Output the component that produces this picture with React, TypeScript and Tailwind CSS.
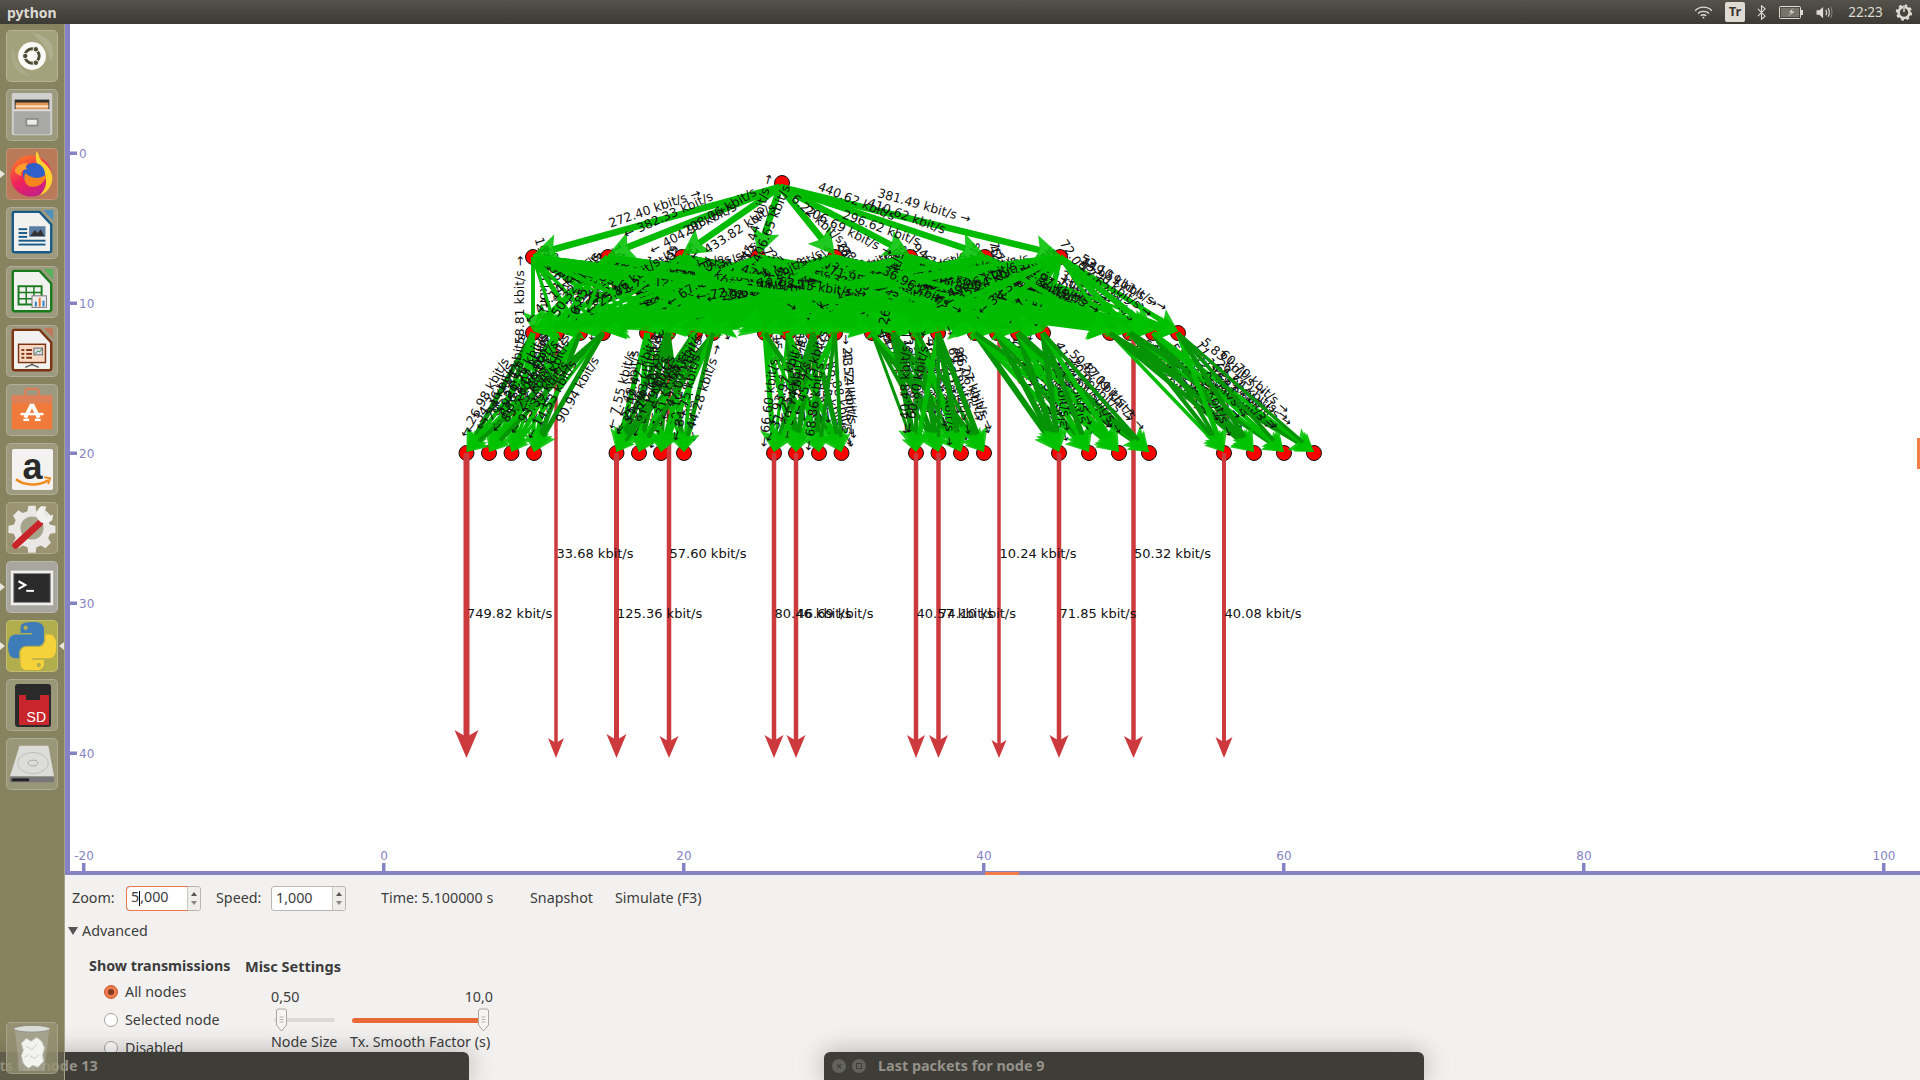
import React from 'react';

const UI_FONT = "font-['Noto_Sans','Open_Sans',sans-serif]";

// node coordinates read off the reference, in page pixels
const ROOT = { x: 782, y: 183 };
const MID_X = [533, 608, 682, 758, 835, 910, 985, 1060];
const UPPER_GROUPS = [
  [533, 557, 580, 603],
  [647, 668, 695, 713],
  [765, 788, 813, 835],
  [872, 893, 917, 938],
  [975, 997, 1018, 1043],
  [1110, 1130, 1153, 1178],
];
const LEAF_GROUPS = [
  [466.5, 489, 511.5, 534],
  [616.5, 639, 661, 684],
  [774, 796, 819, 841.5],
  [916, 938.5, 961, 984],
  [1059, 1089, 1119, 1149],
  [1224, 1254, 1284, 1314],
];
const MID_Y = 257;
const UPPER_Y = 333;
const LEAF_Y = 453;

// ly 558 marks the links that leave from the upper row, 618 the ones from the leaves
const DOWNLINKS = [
  { x: 466.5, w: 6, head: 28, half: 12, label: '749.82 kbit/s', ly: 618 },
  { x: 556, w: 3.5, head: 20, half: 8, label: '33.68 kbit/s', ly: 558 },
  { x: 616.5, w: 5, head: 24, half: 10, label: '125.36 kbit/s', ly: 618 },
  { x: 669, w: 4.5, head: 22, half: 9.5, label: '57.60 kbit/s', ly: 558 },
  { x: 774, w: 4.5, head: 23, half: 9.5, label: '80.46 kbit/s', ly: 618 },
  { x: 796, w: 4.5, head: 23, half: 9.5, label: '46.69 kbit/s', ly: 618 },
  { x: 916, w: 4.5, head: 23, half: 9, label: '40.57 kbit/s', ly: 618 },
  { x: 938.5, w: 4.5, head: 23, half: 9.5, label: '74.10 kbit/s', ly: 618 },
  { x: 999, w: 3.5, head: 18, half: 7.5, label: '10.24 kbit/s', ly: 558 },
  { x: 1059, w: 4.5, head: 23, half: 9.5, label: '71.85 kbit/s', ly: 618 },
  { x: 1133.5, w: 4.5, head: 22, half: 9.5, label: '50.32 kbit/s', ly: 558 },
  { x: 1224, w: 4, head: 21, half: 8.5, label: '40.08 kbit/s', ly: 618 },
];

// labels around the root and the outer edges, placed by hand
const PLACED_LABELS: [string, number, number, number][] = [
  ['272.40 kbit/s →', 656, 212, -19],
  ['← 382.33 kbit/s', 670, 219, -24],
  ['← 404.90 kbit/s', 695, 232, -28],
  ['298.06 kbit/s', 722, 215, -30],
  ['433.82 kbit/s', 742, 232, -33],
  ['75.44 kbit/s →', 762, 218, -75],
  ['406.65 kbit/s', 775, 225, -68],
  ['6.22 kbit/s', 815, 222, 42],
  ['206.69 kbit/s →', 847, 235, 27],
  ['296.62 kbit/s', 880, 232, 20],
  ['440.62 kbit/s', 855, 205, 22],
  ['410.62 kbit/s', 905, 220, 20],
  ['381.49 kbit/s →', 923, 210, 16],
  ['449.59 kbit/s →', 1122, 288, 30],
  ['58.81 kbit/s →', 524, 300, -90],
  ['90.94 kbit/s', 581, 392, -60],
  ['44.28 kbit/s →', 708, 388, -72],
  ['43.74 kbit/s →', 846, 395, 85],
  ['86.27 kbit/s →', 970, 390, 68],
  ['50.87 kbit/s →', 1100, 386, 45],
  ['60.70 kbit/s →', 1252, 385, 42],
];

function makeRandom(seed: number) {
  let s = seed;
  return () => {
    s = (s * 1664525 + 1013904223) % 4294967296;
    return s / 4294967296;
  };
}

type Label = { text: string; x: number; y: number; rot: number };
type Edge = { x1: number; y1: number; x2: number; y2: number; w: number; dark?: boolean; label?: Label };

function buildEdges() {
  const rnd = makeRandom(42);
  const edges: Edge[] = [];

  const add = (e: Edge) => {
    const rate = (rnd() * 90 + 5).toFixed(2);
    let rot = (Math.atan2(e.y2 - e.y1, e.x2 - e.x1) * 180) / Math.PI;
    const forward = rot >= -90 && rot <= 90;
    if (!forward) rot -= 180;
    const rad = (rot * Math.PI) / 180;
    const t = 0.35 + rnd() * 0.3;
    edges.push({
      ...e,
      label: {
        text: forward ? `${rate} kbit/s →` : `← ${rate} kbit/s`,
        x: e.x1 + (e.x2 - e.x1) * t + Math.sin(rad) * 7,
        y: e.y1 + (e.y2 - e.y1) * t - Math.cos(rad) * 7,
        rot,
      },
    });
  };

  // shuffled so that labels get covered by whichever edge is drawn later
  const middle: Edge[] = [];
  MID_X.forEach((x) => {
    UPPER_GROUPS.flat().forEach((ux) => {
      middle.push({ x1: x, y1: MID_Y, x2: ux, y2: UPPER_Y - 2, w: 3 + rnd() * 3.5 });
    });
  });
  middle.sort(() => rnd() - 0.5).forEach(add);

  UPPER_GROUPS.forEach((group, g) => {
    group.forEach((ux) => {
      LEAF_GROUPS[g].forEach((lx) => {
        add({ x1: ux, y1: UPPER_Y, x2: lx, y2: LEAF_Y - 1, w: 3 + rnd() * 3, dark: rnd() > 0.5 });
      });
    });
  });
  MID_X.forEach((x) => edges.push({ x1: ROOT.x - 2, y1: ROOT.y + 4, x2: x, y2: MID_Y - 2, w: 6.5 }));
  return edges;
}

const GRAPH = buildEdges();

function GreenArrow({ e }: { e: Edge }) {
  const dx = e.x2 - e.x1;
  const dy = e.y2 - e.y1;
  const len = Math.hypot(dx, dy);
  const ux = dx / len;
  const uy = dy / len;
  const L = e.w * 2.6 + 9;
  const H = e.w * 1.4 + 5;
  const bx = e.x2 - ux * L;
  const by = e.y2 - uy * L;
  const nx = e.x2 - ux * L * 0.8;
  const ny = e.y2 - uy * L * 0.8;
  const pts = `${e.x2},${e.y2} ${bx - uy * H},${by + ux * H} ${nx},${ny} ${bx + uy * H},${by - ux * H}`;
  return (
    <g>
      <line x1={e.x1} y1={e.y1} x2={nx} y2={ny} stroke={e.dark ? '#059405' : '#00bb00'} strokeWidth={e.w} />
      <polygon points={pts} fill="#00c200" fillOpacity={0.88} />
      {e.label && (
        <text
          x={e.label.x}
          y={e.label.y}
          textAnchor="middle"
          fontSize={12.5}
          fill="#111"
          transform={`rotate(${e.label.rot} ${e.label.x} ${e.label.y})`}
        >
          {e.label.text}
        </text>
      )}
    </g>
  );
}

function Node({ x, y }: { x: number; y: number }) {
  return <circle cx={x} cy={y} r={7.5} fill="#ff0000" stroke="#111" strokeWidth={1} />;
}

function Canvas() {
  const ruler = '#8583c4';
  return (
    <svg viewBox="65 24 1855 851" width={1855} height={851} className="block bg-white font-['DejaVu_Sans',sans-serif]">
      {/* rulers */}
      <rect x={65} y={24} width={5} height={851} fill={ruler} />
      <rect x={65} y={871} width={1855} height={4} fill={ruler} />
      <rect x={985} y={872} width={34} height={3} fill="#f37d4b" />
      <rect x={1917} y={438} width={3} height={31} fill="#f37d4b" />
      {[0, 10, 20, 30, 40].map((v, i) => (
        <g key={v}>
          <rect x={70} y={151.5 + i * 150} width={7} height={3.5} fill={ruler} />
          <text x={79} y={157.5 + i * 150} fontSize={12} fill={ruler}>{v}</text>
        </g>
      ))}
      {[-20, 0, 20, 40, 60, 80, 100].map((v, i) => (
        <g key={v}>
          <rect x={82 + i * 300} y={863} width={3.5} height={8} fill={ruler} />
          <text x={84 + i * 300} y={860} fontSize={12} textAnchor="middle" fill={ruler}>{v}</text>
        </g>
      ))}

      {/* nodes */}
      {LEAF_GROUPS.flat().map((x) => <Node key={`l${x}`} x={x} y={LEAF_Y} />)}
      {UPPER_GROUPS.flat().map((x) => <Node key={`u${x}`} x={x} y={UPPER_Y} />)}
      {MID_X.map((x) => <Node key={`m${x}`} x={x} y={MID_Y} />)}
      <Node x={ROOT.x} y={ROOT.y} />

      {/* downlinks */}
      {DOWNLINKS.map((d) => (
        <g key={d.x} fill="#cd3a3e">
          <line x1={d.x} y1={d.ly === 558 ? UPPER_Y : LEAF_Y} x2={d.x} y2={745} stroke="#cd3a3e" strokeWidth={d.w} />
          <polygon points={`${d.x},758 ${d.x - d.half},${758 - d.head} ${d.x},${758 - d.head * 0.75} ${d.x + d.half},${758 - d.head}`} />
        </g>
      ))}

      {/* transmissions, each with its own label so later edges can cover it */}
      {GRAPH.map((e, i) => <GreenArrow key={i} e={e} />)}

      {/* labels */}
      <g fontSize={12.5} fill="#111">
        {PLACED_LABELS.map(([t, x, y, r]) => (
          <text key={t} x={x} y={y} textAnchor="middle" transform={`rotate(${r} ${x} ${y})`}>{t}</text>
        ))}
        {DOWNLINKS.map((d) => (
          <text key={d.label} x={d.x + 0.5} y={d.ly} fontSize={13}>{d.label}</text>
        ))}
      </g>
    </svg>
  );
}

/* ---------- launcher icons ---------- */

function UbuntuIcon() {
  return (
    <svg viewBox="0 0 52 52" className="h-full w-full">
      <path d="M26 2c18 2 26 14 20 30-3-12-10-22-20-30z" fill="#fff" fillOpacity={0.14} />
      <path d="M6 18c-4 14 4 28 20 30-10-6-18-16-20-30z" fill="#fff" fillOpacity={0.1} />
      <circle cx={26} cy={26} r={14.5} fill="#fbfaf6" />
      <circle cx={26} cy={26} r={7.5} fill="none" stroke="#4e4a35" strokeWidth={3} />
      <circle cx={19} cy={26} r={2.8} fill="#4e4a35" stroke="#fbfaf6" />
      <circle cx={30} cy={19} r={2.8} fill="#4e4a35" stroke="#fbfaf6" />
      <circle cx={30} cy={33} r={2.8} fill="#4e4a35" stroke="#fbfaf6" />
    </svg>
  );
}

function FilesIcon() {
  return (
    <svg viewBox="0 0 52 52" className="h-full w-full">
      <rect x={5} y={3} width={42} height={44} rx={2} fill="#cfcfcd" />
      <rect x={8} y={10} width={36} height={11} fill="#2e2e2e" />
      <rect x={9} y={13} width={34} height={8} fill="#e79650" />
      <rect x={9} y={16} width={34} height={2} fill="#f6e6cf" />
      <rect x={7} y={20} width={38} height={26} rx={1} fill="#a9a9a7" />
      <rect x={7} y={20} width={38} height={2} fill="#dcdcda" />
      <rect x={19} y={29} width={14} height={9} rx={1} fill="#8b8b89" />
      <rect x={21} y={31} width={10} height={5} fill="#ececea" />
    </svg>
  );
}

function FirefoxIcon() {
  return (
    <svg viewBox="0 0 52 52" className="h-full w-full">
      <defs>
        <linearGradient id="ffOuter" x1="0" y1="0" x2="0.5" y2="1">
          <stop offset="0" stopColor="#ff8a1c" />
          <stop offset="0.6" stopColor="#f0245a" />
          <stop offset="1" stopColor="#c81f86" />
        </linearGradient>
      </defs>
      <circle cx={25} cy={28} r={21.5} fill="url(#ffOuter)" />
      <path d="M31 2c3 5 2 8 7 12 6 5 10 11 9 18-1 8-6 14-13 16 5-5 8-11 6-18-2-8-10-12-10-20 0-3 0-6 1-8z" fill="#ffd22e" />
      <circle cx={28} cy={26} r={11.5} fill="#2f5fc9" />
      <path d="M19 25c6 6 15 7 22 1-1 9-9 15-17 13-4-1-8-7-5-14z" fill="#f5841f" />
      <path d="M8 22c3-6 9-8 14-7-3 2-3 4-1 6-4 0-7 2-6 7-3-1-7-3-7-6z" fill="#ff9d2c" />
    </svg>
  );
}

function DocIcon({ edge, tab, kind }: { edge: string; tab: string; kind: 'writer' | 'calc' | 'impress' }) {
  return (
    <svg viewBox="0 0 52 52" className="h-full w-full">
      <path d="M38 2h10v11z" fill={tab} />
      <path d="M8 4h26l12 13v27a2 2 0 0 1-2 2H8a2 2 0 0 1-2-2V6a2 2 0 0 1 2-2z" fill="#f1f1ef" stroke={edge} strokeWidth={2.5} />
      {kind === 'writer' && (
        <g fill={edge}>
          <rect x={12} y={21} width={9} height={2} />
          <rect x={12} y={25} width={9} height={2} />
          <rect x={12} y={29} width={9} height={2} />
          <rect x={12} y={33} width={28} height={2} />
          <rect x={12} y={37} width={28} height={2} />
          <rect x={23} y={19} width={17} height={11} fill="#5d7fa6" />
          <path d="M24 29l5-6 3 3 3-4 4 7z" fill="#333" />
        </g>
      )}
      {kind === 'calc' && (
        <g>
          <rect x={12} y={20} width={24} height={19} fill="none" stroke={edge} strokeWidth={2} />
          <path d="M20 20v19M28 20v19M12 26.500h24M12 33h24" stroke={edge} strokeWidth={1.5} />
          <rect x={26} y={30} width={15} height={12} fill="#eee" stroke="#777" />
          <rect x={29} y={36} width={2} height={5} fill="#2f7fc0" />
          <rect x={33} y={32} width={2} height={9} fill="#e8762c" />
          <rect x={37} y={35} width={2} height={6} fill="#2f7fc0" />
        </g>
      )}
      {kind === 'impress' && (
        <g>
          <rect x={12} y={19} width={28} height={19} fill="#f7d9c4" stroke={edge} strokeWidth={1.5} />
          <rect x={15} y={24} width={3} height={2} fill={edge} />
          <rect x={15} y={28} width={3} height={2} fill={edge} />
          <rect x={15} y={32} width={3} height={2} fill={edge} />
          <rect x={20} y={24} width={6} height={2} fill={edge} />
          <rect x={20} y={28} width={6} height={2} fill={edge} />
          <rect x={20} y={32} width={6} height={2} fill={edge} />
          <rect x={28} y={23} width={9} height={7} fill="#dde" stroke="#666" />
          <path d="M29 29l3-3 2 1 2-3" stroke="#2a8a2a" fill="none" />
          <path d="M26 38v3M19 43l7-3 7 3" stroke="#555" strokeWidth={1.2} fill="none" />
        </g>
      )}
    </svg>
  );
}

function StoreIcon() {
  return (
    <svg viewBox="0 0 52 52" className="h-full w-full">
      <path d="M19 11V7a3 3 0 0 1 3-3h8a3 3 0 0 1 3 3v4" fill="none" stroke="#d9805a" strokeWidth={2.5} />
      <path d="M5 11h42v35H5z" fill="#f07a3a" />
      <path d="M5 11h42v8H5z" fill="#dd8058" />
      <path d="M26 20l-7 14M26 20l7 14" stroke="#fff" strokeWidth={4} fill="none" />
      <rect x={14} y={29} width={24} height={2.5} fill="#fff" />
      <rect x={17} y={35} width={6} height={2.5} fill="#fff" />
      <rect x={29} y={35} width={6} height={2.5} fill="#fff" />
    </svg>
  );
}

function AmazonIcon() {
  return (
    <div className="relative m-[5px] flex h-[41px] w-[41px] justify-center rounded-[2px] bg-[#f3f2f0]">
      <span className="h-[41px] font-['Liberation_Sans',sans-serif] text-[36px] leading-[36px] font-bold text-[#2a2a2a]">a</span>
      <svg viewBox="0 0 42 42" className="absolute inset-0">
        <path d="M4 31c9 7 24 7 33 1" fill="none" stroke="#f08a1d" strokeWidth={2.5} />
        <path d="M33 29l6 1-2 6" fill="none" stroke="#f08a1d" strokeWidth={2} />
      </svg>
    </div>
  );
}

function SettingsIcon() {
  return (
    <svg viewBox="0 0 52 52" className="h-full w-full">
      <path
        d="M22 2h8l1 6 5 2 5-3 6 6-3 5 2 5 6 1v8l-6 1-2 5 3 5-6 6-5-3-5 2-1 6h-8l-1-6-5-2-5 3-6-6 3-5-2-5-6-1v-8l6-1 2-5-3-5 6-6 5 3 5-2z"
        fill="#e9e8e4"
        transform="translate(1.500 1) scale(0.94)"
      />
      <circle cx={26} cy={26} r={12} fill="#a7a48c" />
      <path d="M9 44l25-23" stroke="#c8242a" strokeWidth={7} strokeLinecap="round" />
      <path d="M36 3c-5 3-7 10-3 15 3 4 9 4 14 0l1-6-7 3-3-4 3-7z" fill="#f0f0ee" />
    </svg>
  );
}

function TerminalIcon() {
  return (
    <svg viewBox="0 0 52 52" className="h-full w-full">
      <rect x={4} y={9} width={44} height={36} fill="#f0f0ee" />
      <rect x={7} y={12} width={38} height={30} fill="#2b2b2b" stroke="#888" />
      <path d="M12 20l7 4-7 4" fill="none" stroke="#fff" strokeWidth={2.2} />
      <rect x={20} y={29} width={8} height={2} fill="#fff" />
    </svg>
  );
}

function PythonIcon() {
  return (
    <svg viewBox="0 0 110 110" className="h-full w-full p-[1px]">
      <path
        d="M54.919 0c-4.584.022-8.961.413-12.813 1.095C30.76 3.099 28.7 7.295 28.7 15.032v10.219h26.813v3.406H18.638c-7.793 0-14.616 4.684-16.75 13.594-2.462 10.213-2.571 16.586 0 27.25 1.906 7.938 6.458 13.594 14.25 13.594h9.219v-12.25c0-8.85 7.657-16.656 16.75-16.656h26.781c7.454 0 13.406-6.138 13.406-13.625V15.032c0-7.266-6.13-12.725-13.406-13.937C64.282.328 59.502-.02 54.919 0zM40.419 8.219c2.77 0 5.031 2.299 5.031 5.125 0 2.816-2.262 5.094-5.031 5.094-2.78 0-5.031-2.278-5.031-5.094 0-2.826 2.252-5.125 5.031-5.125z"
        fill="#3d7cb8"
      />
      <path
        d="M85.638 28.657v11.906c0 9.231-7.826 17-16.75 17H42.107c-7.336 0-13.406 6.278-13.406 13.625v25.531c0 7.266 6.319 11.54 13.406 13.625 8.487 2.496 16.626 2.947 26.781 0 6.75-1.954 13.406-5.888 13.406-13.625V86.5H55.513v-3.406H95.7c7.793 0 10.696-5.436 13.406-13.594 2.8-8.399 2.68-16.476 0-27.25-1.926-7.757-5.604-13.594-13.406-13.594zM70.575 93.313c2.78 0 5.031 2.278 5.031 5.094 0 2.826-2.252 5.125-5.031 5.125-2.77 0-5.031-2.299-5.031-5.125 0-2.816 2.262-5.094 5.031-5.094z"
        fill="#f5d13a"
      />
    </svg>
  );
}

function SdIcon() {
  return (
    <div className="relative mx-[8px] mt-[4px] h-[43px] w-[36px] overflow-hidden rounded-[3px] bg-[#2a2a2a]">
      <div className="absolute right-[2px] bottom-[2px] left-[4px] h-[30px] bg-[#c8262c]" />
      <div className="absolute top-0 left-[11px] h-[16px] w-[14px] bg-[#2a2a2a]" />
      <span className="absolute right-[5px] bottom-[3px] font-['Liberation_Sans',sans-serif] text-[14px] leading-none text-white">SD</span>
    </div>
  );
}

function DiskIcon() {
  return (
    <svg viewBox="0 0 52 52" className="h-full w-full">
      <path d="M13 7h30l6 32H3z" fill="#dcdcd8" />
      <ellipse cx={27} cy={25} rx={16} ry={11} fill="none" stroke="#bdbdb8" />
      <ellipse cx={27} cy={25} rx={5} ry={3} fill="none" stroke="#a9a9a3" />
      <path d="M3 39h46v6H3z" fill="#777" />
      <path d="M5 41h18v3H5z" fill="#222" />
    </svg>
  );
}

function TrashIcon() {
  return (
    <svg viewBox="0 0 52 52" className="h-full w-full">
      <path d="M8 6l5 44h26l5-44z" fill="#b9b9b0" fillOpacity={0.45} />
      <ellipse cx={26} cy={6} rx={19} ry={3.500} fill="#dcdcd6" stroke="#8f8f88" />
      <path d="M15 21l5-5 5 3 6-4 5 4 3 7-2 7 1 7-6 6-5-2-5 3-5-5-2-8 2-6z" fill="#f2f2ee" stroke="#c9c9c3" />
      <path d="M20 24l6 4 5-6M24 34l5 3 4-4M18 36l4-3" fill="none" stroke="#c9c9c3" />
    </svg>
  );
}

const TILES: { bg: string; icon: React.ReactNode; pip?: boolean; rightPip?: boolean }[] = [
  { bg: 'bg-[#a4a17d]', icon: <UbuntuIcon /> },
  { bg: 'bg-[#9c9a7e]', icon: <FilesIcon /> },
  { bg: 'bg-[#b87a58]', icon: <FirefoxIcon />, pip: true },
  { bg: 'bg-[#9d9a7f]', icon: <DocIcon edge="#1a5a87" tab="#4d90bd" kind="writer" /> },
  { bg: 'bg-[#9d9a7f]', icon: <DocIcon edge="#197a1c" tab="#55b258" kind="calc" /> },
  { bg: 'bg-[#9d9a7f]', icon: <DocIcon edge="#7d3312" tab="#bd7a5c" kind="impress" /> },
  { bg: 'bg-[#9d9a7f]', icon: <StoreIcon /> },
  { bg: 'bg-[#9d9a7f]', icon: <AmazonIcon /> },
  { bg: 'bg-[#9a9473]', icon: <SettingsIcon /> },
  { bg: 'bg-[#a8a79f]', icon: <TerminalIcon />, pip: true },
  { bg: 'bg-[#b3ae4d]', icon: <PythonIcon />, pip: true, rightPip: true },
  { bg: 'bg-[#9a9678]', icon: <SdIcon /> },
  { bg: 'bg-[#9a9678]', icon: <DiskIcon /> },
];

function Tile({ bg, icon, pip, rightPip }: { bg: string; icon: React.ReactNode; pip?: boolean; rightPip?: boolean }) {
  return (
    <div className={`relative h-[52px] w-[52px] shrink-0 rounded-[5px] border border-white/20 ${bg}`}>
      <div className="absolute inset-0 overflow-hidden">{icon}</div>
      {pip && (
        <span className="absolute top-[21px] left-[-7px] h-0 w-0 border-y-[4px] border-l-[5px] border-y-transparent border-l-[#e8e6dc]" />
      )}
      {rightPip && (
        <span className="absolute top-[21px] right-[-7px] h-0 w-0 border-y-[4px] border-r-[5px] border-y-transparent border-r-[#e8e6dc]" />
      )}
    </div>
  );
}

/* ---------- top bar ---------- */

function TopBar() {
  return (
    <div className={`relative z-30 flex h-[24px] items-center bg-gradient-to-b from-[#55524b] to-[#3c3a35] text-[#dfdbd2] ${UI_FONT}`}>
      <span className="ml-[7px] text-[14px] font-bold">python</span>
      <div className="ml-auto flex items-center">
        <svg viewBox="0 0 20 14" className="mr-[12px] h-[13px] w-[19px]" fill="none" stroke="#dfdbd2" strokeWidth={1.5}>
          <path d="M1 5c5-5 13-5 18 0M4 8c3-3 9-3 12 0M7 10.500c2-1.500 4-1.500 6 0" />
          <circle cx={10} cy={12.500} r={1} fill="#dfdbd2" stroke="none" />
        </svg>
        <span className="mr-[12px] flex h-[20px] w-[20px] items-center justify-center rounded-[2px] bg-[#dfdbd2] text-[13px] font-bold text-[#3c3a35]">Tr</span>
        <svg viewBox="0 0 10 16" className="mr-[13px] h-[15px] w-[9px]" fill="none" stroke="#dfdbd2" strokeWidth={1.2}>
          <path d="M1 4l8 8-4 3.500V.500l4 3.500-8 8" />
        </svg>
        <svg viewBox="0 0 25 13" className="mr-[11px] h-[13px] w-[25px]">
          <rect x={0.5} y={0.5} width={21} height={12} rx={1} fill="none" stroke="#dfdbd2" />
          <rect x={2} y={2} width={18} height={9} fill="#77746c" />
          <rect x={22} y={4} width={2} height={5} fill="#dfdbd2" />
          <path d="M14 2l-4 4.500h3L8 11l8-5.500h-3.500z" fill="#dfdbd2" />
        </svg>
        <svg viewBox="0 0 19 16" className="mr-[13px] h-[15px] w-[19px]" fill="none" stroke="#dfdbd2">
          <path d="M1 5.500h3L8 2v12l-4-3.500H1z" fill="#dfdbd2" stroke="none" />
          <path d="M11 5c1 2 1 4 0 6M13.500 3.500c1.500 3 1.500 6 0 9" strokeWidth={1.3} />
          <path d="M16 2c2 4 2 8 0 12" stroke="#807d75" strokeWidth={1.2} />
        </svg>
        <span className="mr-[11px] w-[37px] text-center text-[13.5px]">22:23</span>
        <svg viewBox="0 0 18 18" className="mr-[7px] h-[18px] w-[18px]" fill="none" stroke="#dfdbd2">
          <circle cx={9} cy={9.500} r={5.500} strokeWidth={2.5} />
          <circle cx={9} cy={9.500} r={7.200} strokeWidth={2} strokeDasharray="3 2.650" />
          <path d="M9 1v8" strokeWidth={2} stroke="#3c3a35" />
          <path d="M9 2v7" strokeWidth={1.5} />
        </svg>
      </div>
    </div>
  );
}

/* ---------- control panel ---------- */

function SpinBox({ value, focused }: { value: string; focused?: boolean }) {
  return (
    <div className={`flex h-[25px] w-[75px] rounded-[3px] border border-[#b9b7b0] bg-white`}>
      <div className={`flex w-[60px] items-center rounded-l-[3px] pl-[4px] ${focused ? 'outline outline-[#e9784c]' : ''}`}>
        {focused ? (
          <span>5<span className="inline-block h-[15px] w-px bg-black align-middle" />,000</span>
        ) : value}
      </div>
      <div className="flex flex-1 flex-col items-center justify-center gap-[5px] rounded-r-[3px] border-l border-[#c9c7c1] bg-[#efeeeb]">
        <span className="h-0 w-0 border-x-[3px] border-b-[4px] border-x-transparent border-b-[#555]" />
        <span className="h-0 w-0 border-x-[3px] border-t-[4px] border-x-transparent border-t-[#888]" />
      </div>
    </div>
  );
}

function Radio({ label, checked }: { label: string; checked?: boolean }) {
  return (
    <div className="flex h-[28px] items-center">
      {checked ? (
        <span className="flex h-[14px] w-[14px] items-center justify-center rounded-full border border-[#c9582f] bg-[#ef7a4d]">
          <span className="h-[6px] w-[6px] rounded-full bg-[#7c3b22]" />
        </span>
      ) : (
        <span className="h-[14px] w-[14px] rounded-full border border-[#a6a49c] bg-white" />
      )}
      <span className="ml-[7px]">{label}</span>
    </div>
  );
}

function Thumb() {
  return (
    <svg viewBox="0 0 13 24" className="h-[24px] w-[13px]">
      <path d="M1.500 3a2 2 0 0 1 2-2h6a2 2 0 0 1 2 2v14l-5 6-5-6z" fill="#f6f5f3" stroke="#a9a7a0" />
      <path d="M4.500 9h4M4.500 11.500h4M4.500 14h4" stroke="#b5b3ac" />
    </svg>
  );
}

function ControlPanel() {
  return (
    <div className={`flex-1 overflow-hidden bg-[#f2f1ef] text-[14.3px] leading-none text-[#3c3c3c] ${UI_FONT}`}>
      <div className="mt-[10px] ml-[7px] flex h-[25px] items-center pt-[1px]">
        <span className="w-[54px]">Zoom:</span>
        <SpinBox value="5,000" focused />
        <span className="ml-[15px] w-[55px]">Speed:</span>
        <SpinBox value="1,000" />
        <span className="ml-[35px] w-[149px]">Time: 5.100000 s</span>
        <span className="w-[85px]">Snapshot</span>
        <span>Simulate (F3)</span>
      </div>
      <div className="mt-[9px] ml-[3px] flex h-[24px] items-center">
        <span className="h-0 w-0 border-x-[5px] border-t-[8px] border-x-transparent border-t-[#555]" />
        <span className="ml-[4px]">Advanced</span>
      </div>
      <div className="mt-[13px] ml-[24px] flex">
        <div className="w-[156px]">
          <div className="flex h-[20px] items-center text-[14.3px] font-bold">Show transmissions</div>
          <div className="mt-[2px] ml-[15px]">
            <Radio label="All nodes" checked />
            <Radio label="Selected node" />
            <Radio label="Disabled" />
          </div>
        </div>
        <div className="w-[260px]">
          <div className="flex h-[20px] items-center text-[14.5px] font-bold">Misc Settings</div>
          <div className="mt-[14px] ml-[26px] flex w-[222px] justify-between">
            <span>0,50</span>
            <span>10,0</span>
          </div>
          <div className="mt-[4px] ml-[29px] flex h-[24px] w-[214px] items-center">
            <div className="relative h-[4px] w-[61px] rounded-full bg-[#dcdad5]">
              <div className="absolute top-[-10px] left-[1px]"><Thumb /></div>
            </div>
            <div className="relative ml-[17px] h-[5px] w-[136px] rounded-full bg-[#e9683a]">
              <div className="absolute top-[-10px] right-[-2px]"><Thumb /></div>
            </div>
          </div>
          <div className="mt-[3px] ml-[26px] flex">
            <span className="w-[79px]">Node Size</span>
            <span>Tx. Smooth Factor (s)</span>
          </div>
        </div>
      </div>
    </div>
  );
}

function WindowTitle({ title, left }: { title: string; left: number }) {
  return (
    <div
      className={`absolute bottom-0 z-10 flex h-[28px] w-[600px] items-center rounded-t-[6px] bg-[#3f3d38] text-[14.4px] font-bold text-[#949289] shadow-[0_0_26px_rgba(0,0,0,0.28)] ${UI_FONT}`}
      style={{ left }}
    >
      <span className="ml-[8px] flex h-[14px] w-[14px] items-center justify-center rounded-full bg-[#63625a] text-[10px] leading-none text-[#3f3d38]">×</span>
      <span className="ml-[6px] flex h-[14px] w-[14px] items-center justify-center rounded-full bg-[#63625a]">
        <span className="h-[6px] w-[6px] border border-[#3f3d38]" />
      </span>
      <span className="ml-[12px]">{title}</span>
    </div>
  );
}

export default function App() {
  return (
    <div className="relative flex h-[1080px] w-[1920px] flex-col overflow-hidden bg-[#87835f]">
      <TopBar />
      <div className="flex flex-1">
        <div className="relative z-20 flex w-[65px] shrink-0 flex-col items-center gap-[7px] border-r border-[#a5a28a] bg-[#87835f]/45 pt-[6px] pb-[6px]">
          {TILES.map((t, i) => <Tile key={i} {...t} />)}
          <div className="mt-auto"><Tile bg="bg-[#9a9678]/70" icon={<TrashIcon />} /></div>
        </div>
        <div className="flex flex-1 flex-col">
          <Canvas />
          <ControlPanel />
        </div>
      </div>
      <WindowTitle title="Last packets for node 13" left={-131} />
      <WindowTitle title="Last packets for node 9" left={824} />
    </div>
  );
}
